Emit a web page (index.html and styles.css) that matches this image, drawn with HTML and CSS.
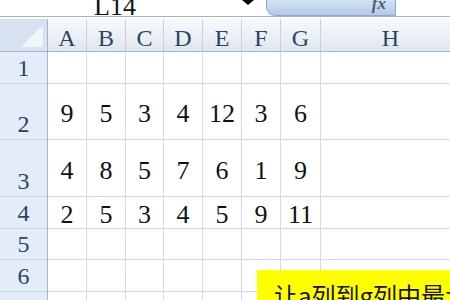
FILE: index.html
```html
<!DOCTYPE html>
<html lang="zh-CN">
<head>
    <meta charset="UTF-8">
    <meta name="viewport" content="width=device-width, initial-scale=1.0">
    <title>工作表</title>
    <link rel="stylesheet" href="styles.css">
</head>
<body>
    <div class="formula-bar">
        <div class="name-box">L14</div>
        <div class="drop-arrow"></div>
        <div class="fx-box"><span class="fx">fx</span></div>
        <div class="formula-input"></div>
    </div>

    <div class="sheet">
        <div class="corner"><div class="corner-tri"></div></div>
        <div class="col-head">A</div>
        <div class="col-head">B</div>
        <div class="col-head">C</div>
        <div class="col-head">D</div>
        <div class="col-head">E</div>
        <div class="col-head">F</div>
        <div class="col-head">G</div>
        <div class="col-head">H</div>

        <div class="row-head">1</div>
        <div class="cell"></div><div class="cell"></div><div class="cell"></div><div class="cell"></div>
        <div class="cell"></div><div class="cell"></div><div class="cell"></div><div class="cell"></div>

        <div class="row-head">2</div>
        <div class="cell">9</div><div class="cell">5</div><div class="cell">3</div><div class="cell">4</div>
        <div class="cell">12</div><div class="cell">3</div><div class="cell">6</div><div class="cell"></div>

        <div class="row-head">3</div>
        <div class="cell">4</div><div class="cell">8</div><div class="cell">5</div><div class="cell">7</div>
        <div class="cell">6</div><div class="cell">1</div><div class="cell">9</div><div class="cell"></div>

        <div class="row-head">4</div>
        <div class="cell">2</div><div class="cell">5</div><div class="cell">3</div><div class="cell">4</div>
        <div class="cell">5</div><div class="cell">9</div><div class="cell">11</div><div class="cell"></div>

        <div class="row-head">5</div>
        <div class="cell"></div><div class="cell"></div><div class="cell"></div><div class="cell"></div>
        <div class="cell"></div><div class="cell"></div><div class="cell"></div><div class="cell"></div>

        <div class="row-head">6</div>
        <div class="cell"></div><div class="cell"></div><div class="cell"></div><div class="cell"></div>
        <div class="cell"></div><div class="cell"></div><div class="cell"></div><div class="cell"></div>

        <div class="row-head"></div>
        <div class="cell"></div><div class="cell"></div><div class="cell"></div><div class="cell"></div>
        <div class="cell"></div><div class="cell"></div><div class="cell"></div><div class="cell"></div>

        <div class="note">让a列到g列中最大的数值显示出来</div>
    </div>
</body>
</html>
```

FILE: styles.css
```css
* {
    box-sizing: border-box;
}
body {
    margin: 0;
    width: 450px;
    height: 300px;
    overflow: hidden;
    background: #fff;
    font-family: 'Liberation Serif', 'Noto Sans CJK SC', serif;
}

/* formula bar */
.formula-bar {
    display: flex;
    height: 17px;
    border-bottom: 1px solid #a3b5cc;
    margin-bottom: 2px;
}
.name-box {
    width: 241px;
    padding-left: 94px;
    font-size: 26px;
    line-height: 16px;
    height: 15px;
    overflow: hidden;
    color: #111;
    display: flex;
    align-items: flex-end;
}
.drop-arrow {
    width: 0;
    height: 0;
    margin-left: 1px;
    border-left: 6px solid transparent;
    border-right: 6px solid transparent;
    border-top: 5px solid #000;
}
.fx-box {
    margin-left: 12px;
    width: 130px;
    height: 16px;
    background: linear-gradient(#d4e2f5, #b3c9e7);
    border: 1px solid #8eaad0;
    border-top: none;
    border-bottom-left-radius: 9px;
    display: flex;
    justify-content: flex-end;
    align-items: flex-start;
    padding-right: 9px;
    overflow: hidden;
}
.fx {
    font-style: italic;
    font-weight: bold;
    font-size: 17px;
    line-height: 8px;
    color: #4d5f78;
}
.formula-input {
    flex: 1;
}

/* sheet grid */
.sheet {
    position: relative;
    display: grid;
    grid-template-columns: 48px 39px 39px 38px 39px 39px 39px 40px 140px;
    grid-template-rows: 33px 32px 56px 57px 32px 31px 32px 32px;
}
.corner {
    position: relative;
    background: #d6e2f1;
    border-right: 1px solid #9eb6ce;
    border-bottom: 1px solid #9eb6ce;
}
.corner-tri {
    position: absolute;
    right: 4px;
    bottom: 4px;
    width: 0;
    height: 0;
    border-left: 22px solid transparent;
    border-bottom: 22px solid #f1f5fa;
}
.col-head {
    background: linear-gradient(#f7f9fc, #e1e7f0);
    border-right: 1px solid #c5d1e0;
    border-bottom: 1px solid #9eb6ce;
    color: #2b4565;
    font-size: 24px;
    display: flex;
    justify-content: center;
    align-items: center;
    padding-top: 6px;
}
.row-head {
    background: #e4ecf7;
    border-right: 1px solid #9eb6ce;
    border-bottom: 1px solid #c5d1e0;
    color: #2b4565;
    font-size: 24px;
    display: flex;
    justify-content: center;
    align-items: flex-end;
    padding-bottom: 3px;
    line-height: 1;
}
.cell {
    border-right: 1px solid #d4dbe8;
    border-bottom: 1px solid #d4dbe8;
    color: #111;
    font-size: 26px;
    display: flex;
    justify-content: center;
    align-items: center;
    padding-top: 5px;
}

.note {
    position: absolute;
    left: 257px;
    top: 251px;
    width: 210px;
    height: 40px;
    background: #ffff00;
    padding-left: 17px;
    padding-top: 10px;
    font-family: 'Noto Sans CJK SC', sans-serif;
    font-size: 24px;
    line-height: 30px;
    white-space: nowrap;
    overflow: hidden;
    color: #111;
}
```
